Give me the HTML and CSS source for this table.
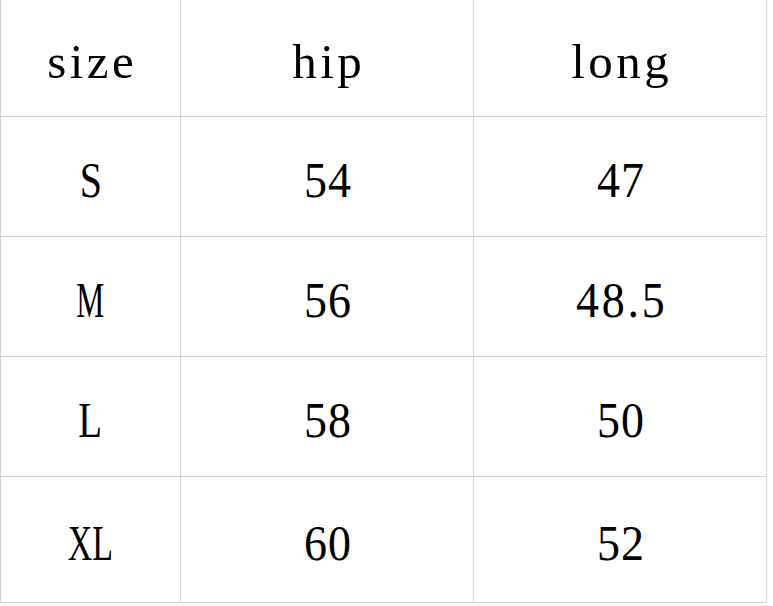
FILE: index.html
```html
<!DOCTYPE html>
<html>
<head>
<meta charset="utf-8">
<link rel="stylesheet" href="styles.css">
</head>
<body>
<div class="sheet">
  <div class="cell head"><span class="t">size</span></div>
  <div class="cell head"><span class="t">hip</span></div>
  <div class="cell head"><span class="t">long</span></div>

  <div class="cell sz sz-s"><span class="t">S</span></div>
  <div class="cell num"><span class="t">54</span></div>
  <div class="cell num"><span class="t">47</span></div>

  <div class="cell sz sz-m"><span class="t">M</span></div>
  <div class="cell num"><span class="t">56</span></div>
  <div class="cell num dec"><span class="t">48.5</span></div>

  <div class="cell sz sz-l"><span class="t">L</span></div>
  <div class="cell num"><span class="t">58</span></div>
  <div class="cell num"><span class="t">50</span></div>

  <div class="cell sz sz-xl"><span class="t">XL</span></div>
  <div class="cell num"><span class="t">60</span></div>
  <div class="cell num"><span class="t">52</span></div>
</div>
</body>
</html>
```

FILE: styles.css
```css
html, body {
  margin: 0;
  padding: 0;
  background: #ffffff;
}
.sheet {
  display: grid;
  grid-template-columns: 179px 292px 292px;
  grid-template-rows: 116px 119px 119px 119px 125px;
  gap: 1px;
  padding: 0 1px 1px 1px;
  width: max-content;
  background: #d4d4d4;
}
.cell {
  background: #ffffff;
  display: flex;
  align-items: center;
  justify-content: center;
  padding-top: 6px;
  box-sizing: border-box;
  font-family: "Liberation Serif", "Times New Roman", serif;
  font-size: 50px;
  color: #000000;
}
.t {
  display: inline-block;
  white-space: nowrap;
}
.head .t {
  font-size: 49px;
  letter-spacing: 3.5px;
  margin-right: -3.5px;
}
.num .t {
  transform: scaleX(0.92);
  letter-spacing: 1px;
  margin-right: -1px;
}
.num.dec .t {
  letter-spacing: 3px;
  margin-right: -3px;
}
.sz-s .t { transform: scaleX(0.8); }
.sz-m .t { transform: scaleX(0.63); }
.sz-l .t { transform: scaleX(0.78); }
.sz-xl .t { transform: scaleX(0.68); }
```
